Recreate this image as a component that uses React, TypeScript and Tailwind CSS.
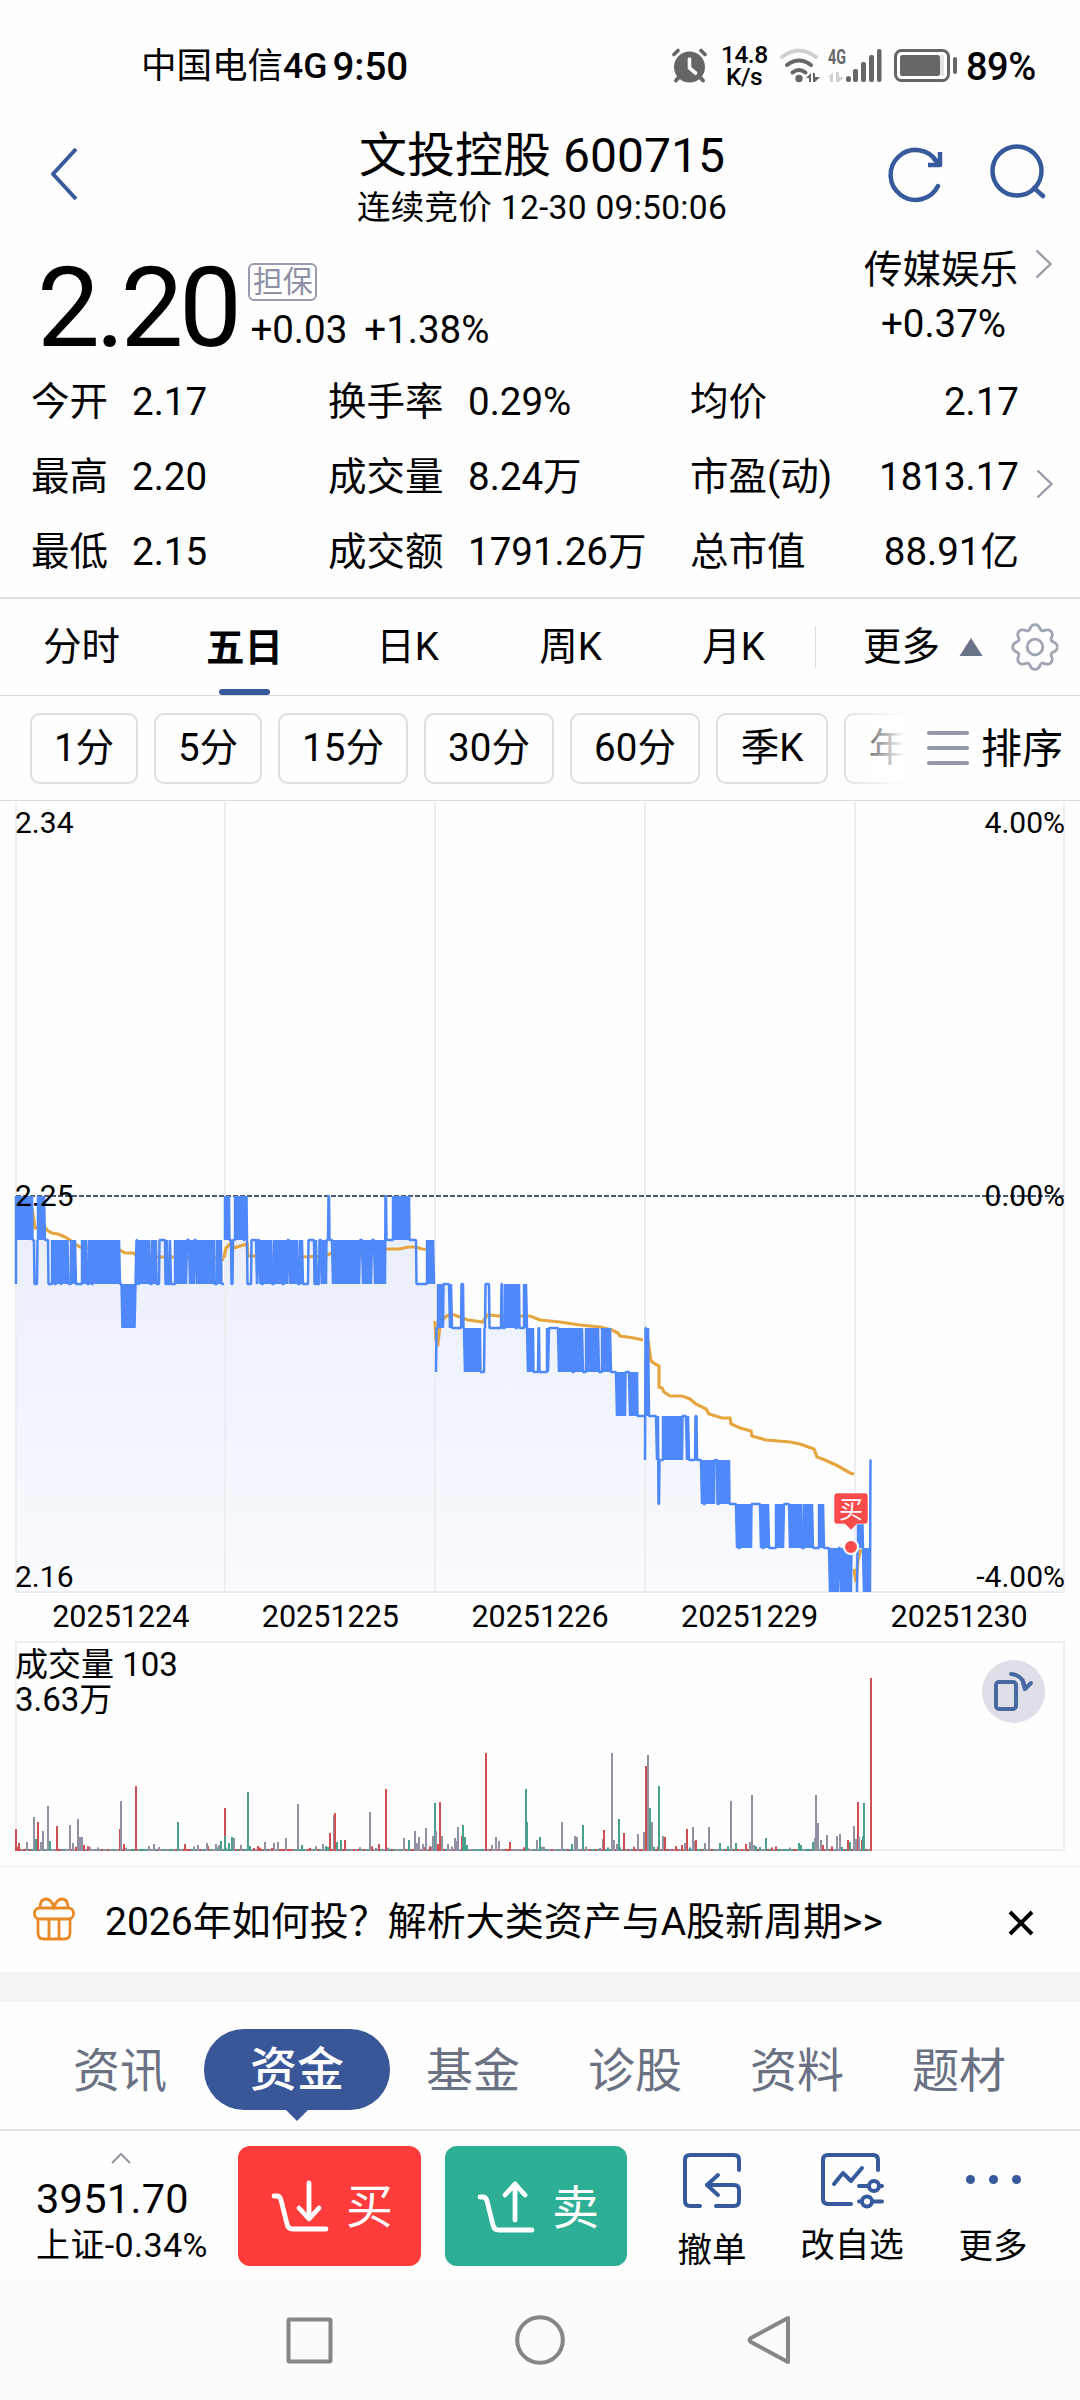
import { FC, ReactNode } from "react";

interface TextProps {
  children: ReactNode;
}

type Run = [number, number, number];
type Point = [number, number];
type Bar = [number, number, string];

const UP = "#cf5052";
const DOWN = "#4ba18f";
const FLAT = "#9092a3";
const BRAND = "#365a9b";

const QUOTE_ROWS = [
  ["今开", "2.17", "换手率", "0.29%", "均价", "2.17"],
  ["最高", "2.20", "成交量", "8.24万", "市盈(动)", "1813.17"],
  ["最低", "2.15", "成交额", "1791.26万", "总市值", "88.91亿"],
];

const PERIODS = ["分时", "五日", "日K", "周K", "月K"];
const DATES = ["20251224", "20251225", "20251226", "20251229", "20251230"];
const GRID_X = [16, 225, 435, 645, 855, 1064];

// [end x, upper tick, lower tick], one tick is 0.01 below 2.25
const DAYS: { start: number; from: number; runs: Run[] }[] = [
  {
    start: 16,
    from: 2,
    runs: [
      [32, 0, 1], [34, 1, 1], [37, 2, 2], [38, 1, 1], [45, 0, 1], [48, 1, 1], [52, 2, 2], [54, 1, 2],
      [56, 2, 2], [60, 1, 2], [61.5, 2, 2], [68, 1, 2], [71, 2, 2], [76, 1, 2], [82, 2, 2], [87, 1, 2],
      [89, 2, 2], [91, 1, 2], [93, 2, 2], [120, 1, 2], [121.5, 2, 2], [136, 2, 3], [137, 1, 1], [139, 2, 2],
      [150, 1, 2], [152, 2, 2], [156, 1, 2], [159, 2, 2], [165, 1, 1], [167, 2, 2], [168, 1, 2], [170, 2, 2],
      [171, 1, 2], [175, 2, 2], [187, 1, 2], [189, 1, 1], [194, 1, 2], [196, 1, 1], [214, 1, 2], [217, 2, 2],
      [221, 1, 2], [224, 2, 2],
    ],
  },
  {
    start: 225,
    from: 1,
    runs: [
      [229, 0, 1], [231, 1, 1], [232.5, 2, 2], [235, 1, 1], [243, 0, 1], [244.5, 1, 1], [247, 0, 1],
      [251, 2, 2], [256, 1, 1], [257, 1, 2], [259, 1, 1], [261, 1, 2], [263, 2, 2], [272, 1, 2], [274, 2, 2],
      [282, 1, 2], [284, 2, 2], [287, 1, 2], [289, 1, 1], [298, 1, 2], [300, 2, 2], [303, 1, 2], [308, 2, 2],
      [314, 1, 1], [316, 2, 2], [317, 1, 2], [319, 2, 2], [321, 1, 1], [326, 1, 2], [328, 1, 1],
      [329, 0, 0], [332, 1, 1], [360, 1, 2], [362, 1, 1], [372, 1, 2], [374, 1, 1], [385, 1, 2],
      [386, 0, 0], [393, 1, 1], [409, 0, 1], [416, 1, 1], [427, 2, 2], [434, 1, 2],
    ],
  },
  {
    start: 436,
    from: 4,
    runs: [
      [438, 3, 3], [443, 2, 3], [449, 2, 2], [452, 2, 3], [461, 3, 3], [463, 2, 2], [464, 3, 3], [480, 3, 4],
      [484, 4, 4], [485, 3, 3], [489, 2, 2], [501, 3, 3], [502, 2, 2], [505, 3, 3], [515, 2, 3], [517, 3, 3],
      [519, 2, 3], [524, 3, 3], [527, 2, 3], [533, 3, 4], [538, 4, 4], [539, 3, 3], [547, 4, 4], [549, 3, 4],
      [558, 3, 3], [572, 3, 4], [574, 4, 4], [583, 3, 4], [586, 4, 4], [599, 3, 4], [602, 4, 4], [611, 3, 4],
      [616, 4, 4], [625, 4, 5], [629, 4, 4], [637, 4, 5], [644, 5, 5],
    ],
  },
  {
    start: 645,
    from: 6,
    runs: [
      [646, 3, 3], [649, 3, 5], [656, 5, 5], [658, 5, 6], [659, 7, 7], [663, 6, 6], [682, 5, 6], [686, 5, 5],
      [689, 5, 6], [695, 6, 6], [696.5, 5, 5], [701, 6, 6], [703, 6, 7], [705, 7, 7], [714, 6, 7], [717, 6, 6],
      [719, 7, 7], [729, 6, 7], [736, 7, 7], [738, 7, 8], [740, 8, 8], [751, 7, 8], [760, 7, 7], [762, 7, 8],
      [764, 8, 8], [769, 7, 8], [776, 8, 8], [784, 7, 8], [789, 7, 7], [802, 7, 8], [804, 8, 8], [813, 7, 8],
      [819, 8, 8], [824, 7, 8], [829, 8, 8], [838, 8, 9], [840, 8, 8], [851, 8, 9], [853, 8, 8],
    ],
  },
  {
    start: 857,
    from: 9,
    runs: [[858, 8, 8], [863, 7, 8], [870, 8, 9], [871, 6, 6]],
  },
];

const AVERAGES: Point[][] = [
  [
    [32, 1208], [35, 1228], [44, 1226], [48, 1231], [52, 1233], [58, 1234], [65, 1237], [70, 1240], [75, 1244],
    [80, 1247], [90, 1248], [120, 1250], [125, 1253], [134, 1253], [137, 1257], [175, 1257], [215, 1258], [224, 1260],
  ],
  [
    [224, 1258], [226, 1248], [230, 1244], [234, 1248], [240, 1246], [247, 1244], [248, 1256], [300, 1257],
    [325, 1256], [332, 1253], [360, 1256], [380, 1250], [387, 1249], [400, 1249], [408, 1247], [416, 1247],
    [422, 1249], [434, 1250],
  ],
  [
    [435, 1321], [436, 1340], [438, 1343], [440, 1325], [445, 1317], [451, 1314], [460, 1317], [468, 1320],
    [483, 1322], [487, 1315], [500, 1316], [530, 1316], [540, 1320], [560, 1322], [580, 1325], [600, 1327],
    [612, 1330], [618, 1333], [620, 1336], [634, 1338], [643, 1340],
  ],
  [
    [648, 1340], [651, 1361], [655, 1364], [659, 1366], [659, 1387], [662, 1388], [664, 1392], [670, 1396],
    [682, 1396], [690, 1399], [696, 1404], [706, 1409], [709, 1414], [722, 1418], [730, 1418], [731, 1424],
    [740, 1428], [751, 1431], [752, 1436], [766, 1440], [790, 1442], [800, 1444], [814, 1449], [817, 1457],
    [825, 1460], [838, 1466], [850, 1473], [854, 1474],
  ],
  [[854, 1569], [856, 1582], [858, 1560], [861, 1549]],
];

// [x, height, colour]
const BARS: Bar[] = [
  [16, 21, UP], [19, 7, UP], [27, 8, FLAT], [34, 33, FLAT], [36, 11, DOWN], [38, 28, UP], [41, 8, FLAT],
  [43, 19, FLAT], [48, 44, FLAT], [50, 9, DOWN], [57, 24, UP], [70, 25, FLAT], [73, 7, FLAT], [78, 31, FLAT],
  [80, 13, FLAT], [82, 13, FLAT], [84, 5, UP], [120, 21, UP], [121, 49, FLAT], [124, 6, UP], [136, 64, UP],
  [149, 4, FLAT], [154, 6, FLAT], [159, 3, FLAT], [178, 28, DOWN], [185, 6, UP], [198, 5, FLAT], [207, 7, FLAT],
  [216, 6, FLAT], [219, 5, FLAT], [221, 9, DOWN], [225, 42, UP], [225, 14, DOWN], [229, 7, DOWN], [232, 13, DOWN],
  [234, 12, FLAT], [241, 5, FLAT], [248, 58, DOWN], [258, 4, UP], [265, 8, FLAT], [274, 7, FLAT], [278, 8, FLAT],
  [286, 12, FLAT], [298, 46, FLAT], [302, 5, DOWN], [323, 6, FLAT], [330, 17, UP], [334, 35, FLAT], [335, 37, UP],
  [337, 8, DOWN], [341, 10, DOWN], [345, 10, UP], [370, 38, FLAT], [379, 6, UP], [386, 61, UP], [404, 12, FLAT],
  [409, 10, DOWN], [415, 19, FLAT], [417, 7, FLAT], [419, 13, FLAT], [423, 6, FLAT], [426, 22, FLAT],
  [433, 14, FLAT], [435, 47, DOWN], [436, 19, FLAT], [438, 6, UP], [440, 48, UP], [442, 14, FLAT], [448, 6, FLAT],
  [455, 12, FLAT], [457, 9, FLAT], [458, 23, FLAT], [462, 14, UP], [463, 25, DOWN], [465, 13, DOWN], [467, 5, DOWN],
  [486, 97, UP], [492, 5, FLAT], [496, 13, FLAT], [499, 9, FLAT], [510, 8, UP], [526, 61, DOWN], [527, 28, DOWN],
  [537, 10, FLAT], [540, 13, DOWN], [562, 28, FLAT], [572, 6, DOWN], [575, 14, FLAT], [577, 13, FLAT],
  [583, 25, DOWN], [603, 11, FLAT], [604, 20, UP], [612, 97, FLAT], [614, 10, FLAT], [617, 6, FLAT],
  [619, 31, DOWN], [624, 17, UP], [638, 16, FLAT], [644, 18, FLAT], [646, 84, UP], [648, 95, FLAT], [650, 42, DOWN],
  [652, 28, FLAT], [659, 64, DOWN], [663, 14, FLAT], [665, 13, UP], [682, 5, UP], [685, 7, FLAT], [687, 21, UP],
  [693, 23, FLAT], [695, 9, FLAT], [696, 10, UP], [705, 7, FLAT], [709, 23, FLAT], [720, 7, DOWN], [731, 49, FLAT],
  [736, 7, DOWN], [746, 6, UP], [750, 8, FLAT], [752, 55, FLAT], [754, 5, FLAT], [766, 12, DOWN], [799, 7, DOWN],
  [801, 5, DOWN], [813, 8, DOWN], [815, 12, FLAT], [816, 55, FLAT], [818, 27, FLAT], [821, 10, FLAT],
  [823, 5, UP], [827, 15, FLAT], [837, 14, FLAT], [840, 16, FLAT], [848, 10, UP], [850, 8, DOWN], [854, 24, FLAT],
  [856, 11, FLAT], [858, 48, UP], [859, 13, FLAT], [862, 10, UP], [863, 14, DOWN], [864, 47, DOWN], [871, 172, UP],
];

const tickY = (tick: number) => 1196 + tick * 44;

// Dense runs swing between both ticks on every step
const tracePrice = (start: number, from: number, runs: Run[]) => {
  let x = start;
  let d = `M${x} ${tickY(from)}`;
  runs.forEach(([end, top, bottom]) => {
    if (top === bottom) {
      d += `L${x + 0.5} ${tickY(top)}L${end} ${tickY(top)}`;
    } else {
      let low = false;
      for (let p = x; p <= end; p += 1) {
        d += `L${p} ${tickY(low ? bottom : top)}`;
        low = !low;
      }
    }
    x = end;
  });
  return { d, end: x };
};

const noise = (i: number) => {
  const v = Math.sin(i * 12.9898) * 43758.5453;
  return v - Math.floor(v);
};

const SMALL_BARS: Bar[] = Array.from({ length: 428 }, (_, i) => {
  const color = noise(i + 9) > 0.72 ? UP : noise(i + 31) > 0.6 ? DOWN : FLAT;
  return [16 + i * 2, noise(i) > 0.86 ? 2 + noise(i + 5) * 2 : 1, color];
});

const Chevron: FC = () => (
  <svg viewBox="0 0 18 30" className="h-[30px] w-[18px]" fill="none" stroke="#9a9ba9" strokeWidth="2.4">
    <path d="M1.5 1.5 15.5 15 1.5 28.5" />
  </svg>
);

const StatusBar: FC = () => (
  <div className="flex h-[132px] pl-[141px]">
    <div className="flex w-[530px] shrink-0 items-center pt-[2px] text-[35.500px] leading-none">
      <span>中国电信</span>
      <span className="font-medium">4G</span>
      <span className="ml-[5px] text-[38.500px] font-medium">9:50</span>
    </div>
    <div className="flex items-center text-[#666666]">
      <svg viewBox="671 48 37 36" className="h-[36px] w-[37px]" fill="none" stroke="currentColor" strokeLinecap="round">
        <circle cx="689.5" cy="67" r="15.5" fill="currentColor" stroke="none" />
        <path d="m680 76-4 4.500M699 76l4 4.500" strokeWidth="4" />
        <path d="m674 54.500 4-4M705 54.500l-4-4" strokeWidth="3.600" />
        <path d="M689.500 59v9l6 5" stroke="#fff" strokeWidth="3.600" />
      </svg>
      <div className="ml-[13px] w-[46px] text-center text-[24.500px] font-medium leading-[22px] tracking-[-0.500px] text-black">
        <div>14.8</div>
        <div>K/s</div>
      </div>
      <svg viewBox="779 46 107 38" className="ml-[11px] h-[38px] w-[107px]" fill="none" stroke="currentColor">
        <g strokeLinecap="round" strokeWidth="4">
          <path d="M783 56q17-13 34 0" stroke="#d0d0d0" />
          <path d="M788 64q12-9 24 0" />
          <path d="M793.500 71.500q6.500-5 13 0" />
        </g>
        <g fill="currentColor" stroke="none">
          <circle cx="800" cy="77.500" r="3.700" />
          <path d="m807 77 5-5v9h-2v-4zM814 72h2v4h5l-5 5h-2z" />
          <path d="m829 76 5-5v10h-3v-5zM837 71h3v5h5l-5 5h-3z" fill="#d0d0d0" />
          <rect x="847" y="75" width="5" height="6" rx="2.500" />
          <rect x="854" y="68" width="5" height="13" rx="2" />
          <rect x="862" y="61" width="5" height="20" rx="2" />
          <rect x="870" y="54" width="5" height="27" rx="2" />
          <rect x="878" y="48" width="4.500" height="33" rx="2" />
          <text x="829" y="63" fontSize="20" fontWeight="700" textLength="18" lengthAdjust="spacingAndGlyphs">
            4G
          </text>
        </g>
      </svg>
      <svg viewBox="894 48 65 36" className="ml-[8px] h-[36px] w-[65px]">
        <rect x="896.500" y="50.500" width="53" height="30" rx="6" fill="none" stroke="currentColor" strokeWidth="3" />
        <rect x="901" y="55" width="40" height="21" rx="2.500" fill="currentColor" />
        <rect x="941" y="55" width="4" height="21" rx="1.500" fill="#e4e4e4" />
        <rect x="954" y="57" width="4" height="17" rx="2" fill="currentColor" />
      </svg>
      <span className="ml-[8px] pt-[2px] text-[38px] font-medium leading-none tracking-[-0.500px] text-black">89%</span>
    </div>
  </div>
);

const Header: FC = () => (
  <div className="flex h-[106px] items-start justify-between pl-[49px] pr-[34px]">
    <svg viewBox="0 0 30 54" className="mt-[15px] h-[54px] w-[30px]" fill="none" stroke={BRAND} strokeWidth="4">
      <path d="M27 2 4 27l23 25" strokeLinejoin="round" />
    </svg>
    <div className="ml-[119px] flex flex-col items-center">
      <div className="text-[48px] leading-[48px]">文投控股 600715</div>
      <div className="mt-[11px] text-[33.500px] leading-[34px] tracking-[0.300px]">连续竞价 12-30 09:50:06</div>
    </div>
    <svg viewBox="886 143 160 62" className="mt-[11px] h-[62px] w-[160px]" fill="none" stroke={BRAND} strokeWidth="4.500">
      <path d="M938 186a25 25 0 1 1-1-24" strokeLinecap="round" />
      <path d="M928 165h12v-13" strokeWidth="4.500" strokeLinejoin="round" />
      <path d="m933 158 6 6" strokeWidth="4" />
      <circle cx="1017" cy="171" r="24.500" />
      <path d="m1034 188 9 8" strokeLinecap="round" />
    </svg>
  </div>
);

const Price: FC = () => (
  <div className="flex h-[126px] pl-[37px]">
    <div className="pt-[14px] text-[112px] leading-none tracking-[-4.500px]">2.20</div>
    <div className="ml-[11px] pt-[25px]">
      <div className="flex h-[38px] w-[69px] items-center justify-center rounded-[6px] border-2 border-[#9a9bb0] text-[30px] leading-none text-[#8f90a6]">
        担保
      </div>
      <div className="mt-[9px] flex gap-[17px] pl-[2px] text-[38.500px] leading-[39px]">
        <span>+0.03</span>
        <span>+1.38%</span>
      </div>
    </div>
    <div className="ml-auto w-[154px] pt-[12px] text-center text-[38.500px] leading-[39px]">
      <div>传媒娱乐</div>
      <div className="mt-[15px] pl-[5px]">+0.37%</div>
    </div>
    <div className="w-[62px] pl-[17px] pt-[11px]">
      <Chevron />
    </div>
  </div>
);

const Quotes: FC = () => (
  <div className="flex h-[235px] items-start border-b-2 border-[#dfdfdf]">
    <div className="w-[1019px] pt-px">
      {QUOTE_ROWS.map((row) => (
        <div key={row[0]} className="flex h-[75px] items-center pl-[31px] text-[38.500px] leading-none">
          <span className="w-[101px]">{row[0]}</span>
          <span className="w-[196px]">{row[1]}</span>
          <span className="w-[140px]">{row[2]}</span>
          <span className="w-[222px]">{row[3]}</span>
          <span>{row[4]}</span>
          <span className="ml-auto">{row[5]}</span>
        </div>
      ))}
    </div>
    <div className="pl-[17px] pt-[105px]">
      <Chevron />
    </div>
  </div>
);

// Eight wide round teeth with narrow notches between them
const GEAR_PATH = Array.from({ length: 97 }, (_, i) => {
  const a = (i / 96) * Math.PI * 2;
  const notch = Math.pow((1 - Math.cos(a * 8)) / 2, 1.5);
  const r = 22.3 - 4.8 * notch;
  return `${i ? "L" : "M"}${(24 + r * Math.cos(a)).toFixed(2)} ${(24 + r * Math.sin(a)).toFixed(2)}`;
}).join("");

const PeriodTabs: FC = () => (
  <div className="flex h-[97px] items-center border-b border-[#dcdcdf] text-[38.500px] leading-none">
    {PERIODS.map((label) =>
      label === "五日" ? (
        <div key={label} className="flex h-full w-[163px] flex-col items-center justify-end font-bold">
          <span className="pb-[22px]">{label}</span>
          <span className="h-[6px] w-[51px] rounded-[3px] bg-[#365a9b]" />
        </div>
      ) : (
        <div key={label} className="w-[163px] text-center">
          {label}
        </div>
      ),
    )}
    <div className="h-[42px] w-px bg-[#dcdcdf]" />
    <span className="ml-[47px]">更多</span>
    <svg viewBox="0 0 24 20" className="ml-[19px] h-[20px] w-[24px]">
      <path d="M12 1 23.500 19H.5z" fill="#6a7488" />
    </svg>
    <svg viewBox="0 0 48 48" className="ml-[28px] h-[48px] w-[48px]" fill="none" stroke="#a0a5b4" strokeWidth="2.800">
      <path d={GEAR_PATH} strokeLinejoin="round" />
      <circle cx="24" cy="24" r="7.800" />
    </svg>
  </div>
);

const Chip: FC<TextProps & { width: string }> = ({ children, width }) => (
  <div
    className={`flex h-[71px] shrink-0 items-center justify-center rounded-[10px] border-2 border-[#dddee2] ${width}`}
  >
    {children}
  </div>
);

const MinuteChips: FC = () => (
  <div className="flex h-[105px] items-center border-b border-[#dcdcdf] text-[38.500px] leading-none">
    <div className="relative flex w-[905px] gap-[16px] overflow-hidden pl-[30px]">
      <Chip width="w-[108px]">1分</Chip>
      <Chip width="w-[108px]">5分</Chip>
      <Chip width="w-[130px]">15分</Chip>
      <Chip width="w-[130px]">30分</Chip>
      <Chip width="w-[130px]">60分</Chip>
      <Chip width="w-[112px]">季K</Chip>
      <Chip width="w-[112px]">年K</Chip>
      <div className="absolute inset-y-0 right-0 w-[60px] bg-linear-to-r from-white/10 to-white" />
    </div>
    <div className="ml-[22px] flex w-[42px] flex-col gap-[11px]">
      <span className="h-[4px] rounded-full bg-[#9298a8]" />
      <span className="h-[4px] rounded-full bg-[#9298a8]" />
      <span className="h-[4px] rounded-full bg-[#9298a8]" />
    </div>
    <span className="ml-[12px] pt-[2px] text-[41px]">排序</span>
  </div>
);

const PriceChart: FC = () => (
  <svg viewBox="0 801 1080 793" className="block h-[793px] w-[1080px]" fontSize="30">
    <defs>
      <linearGradient id="price-area" gradientUnits="userSpaceOnUse" x1="0" y1="1196" x2="0" y2="1592">
        <stop offset="0" stopColor="#e9eef9" />
        <stop offset="0.500" stopColor="#f0f4fd" />
        <stop offset="1" stopColor="#fafbfe" />
      </linearGradient>
    </defs>
    {DAYS.map((day) => {
      const { d, end } = tracePrice(day.start, day.from, day.runs);
      return <path key={day.start} d={`${d}L${end} 1592L${day.start} 1592Z`} fill="url(#price-area)" />;
    })}
    <g stroke="#edeef1" strokeWidth="2">
      {GRID_X.map((x) => (
        <path key={x} d={`M${x} 802V1592`} />
      ))}
      <path d="M15 1592H1065" />
    </g>
    <path d="M16 1196H1064" stroke="#4a5c70" strokeWidth="2" strokeDasharray="5 2" />
    {AVERAGES.map((points, i) => (
      <path key={i} d={`M${points.join("L")}`} fill="none" stroke="#e5a63f" strokeWidth="3.200" />
    ))}
    {DAYS.map((day) => (
      <path
        key={day.start}
        d={tracePrice(day.start, day.from, day.runs).d}
        fill="none"
        stroke="#4e88fb"
        strokeWidth="2.500"
        strokeLinejoin="bevel"
      />
    ))}
    <text x="15" y="833">2.34</text>
    <text x="15" y="1206">2.25</text>
    <text x="15" y="1587">2.16</text>
    <g textAnchor="end">
      <text x="1065" y="833">4.00%</text>
      <text x="1065" y="1206">0.00%</text>
      <text x="1065" y="1587">-4.00%</text>
    </g>
    <path
      d="M837 1493h28a3 3 0 0 1 3 3v25a3 3 0 0 1-3 3h-8l-6 6-6-6h-8a3 3 0 0 1-3-3v-25a3 3 0 0 1 3-3z"
      fill="#f94a4c"
      stroke="#fff"
      strokeOpacity="0.600"
    />
    <text x="851" y="1518" fontSize="24" textAnchor="middle" fill="#fff">买</text>
    <circle cx="851" cy="1547" r="7" fill="#f94a4c" stroke="#fff" strokeWidth="2" />
  </svg>
);

const VolumeChart: FC = () => (
  <div className="relative h-[226px] border-b border-[#f0f0f0]">
    <svg viewBox="0 1641 1080 225" className="block h-[225px] w-[1080px]" fontSize="33">
      <rect x="16" y="1642" width="1048" height="208" fill="none" stroke="#efeff1" strokeWidth="2" />
      {[...SMALL_BARS, ...BARS].map(([x, height, color], i) => (
        <rect key={i} x={x - 1} y={1850 - height} width="2" height={height + 1} fill={color} />
      ))}
      <text x="15" y="1676">成交量 103</text>
      <text x="15" y="1711">3.63万</text>
    </svg>
    <div className="absolute left-[982px] top-[19px] flex size-[63px] items-center justify-center rounded-full bg-[#dfe0e7]">
      <svg viewBox="999 1670 42 44" className="h-[44px] w-[42px]" fill="none" stroke="#4a69a3" strokeWidth="4">
        <rect x="1002" y="1682" width="20" height="27" rx="3" />
        <path d="M1017 1674q13 1 14 15" strokeLinecap="round" />
        <path d="m1029 1683 2 6 6-6" strokeLinecap="round" strokeLinejoin="round" />
      </svg>
    </div>
  </div>
);

const Banner: FC = () => (
  <div className="flex h-[105px] items-center pl-[33px] text-[39px] leading-none">
    <svg viewBox="33 1897 42 44" className="-mt-px h-[44px] w-[42px]" fill="none" stroke="#e88a26" strokeWidth="2.800">
      <rect x="34.500" y="1908" width="39" height="11" rx="5" />
      <path d="M38 1919v14q0 6 6 6h20q6 0 6-6v-14M49 1919v20M59 1919v20" />
      <path d="M40 1908q0-9 6-9 5 0 8 8 3-8 8-8 6 0 6 9" />
    </svg>
    <span className="ml-[30px] pt-[5px]">2026年如何投？解析大类资产与A股新周期&gt;&gt;</span>
    <svg viewBox="0 0 26 26" className="ml-auto mr-[46px] mt-[7px] h-[26px] w-[26px]" stroke="#000" strokeWidth="4">
      <path d="m2 2 22 22M24 2 2 24" />
    </svg>
  </div>
);

const InfoTabs: FC = () => (
  <div className="flex h-[129px] items-center border-b-2 border-[#e1e1e2] pl-[73px] pt-[9px] text-[47px] leading-none text-[#6a7183]">
    <span>资讯</span>
    <div className="relative -mt-px ml-[37px] mr-[36px] flex h-[81px] w-[186px] items-center justify-center rounded-[40px] bg-[#395699] font-medium text-white">
      资金
      <svg viewBox="0 0 24 12" className="absolute left-[81px] top-[80px] h-[12px] w-[24px]">
        <path d="M0 0h24L12 12z" fill="#395699" />
      </svg>
    </div>
    <div className="flex gap-[68px]">
      <span>基金</span>
      <span>诊股</span>
      <span>资料</span>
      <span>题材</span>
    </div>
  </div>
);

const ActionBar: FC = () => (
  <div className="flex h-[149px] items-start">
    <div className="flex h-full w-[238px] flex-col pl-[36px]">
      <svg viewBox="0 0 20 12" className="ml-[75px] mt-[21px] h-[12px] w-[20px]" fill="none" stroke="#9497a3" strokeWidth="2">
        <path d="m1 11 9-9 9 9" />
      </svg>
      <span className="mt-[14px] text-[41.500px] leading-[42px] tracking-[0.300px]">3951.70</span>
      <span className="mt-[8px] whitespace-nowrap text-[34px] leading-[34px] tracking-[0.400px]">上证-0.34%</span>
    </div>
    <div className="mt-[15px] flex h-[120px] w-[183px] items-center rounded-[12px] bg-[#fe3c3c] pl-[31px] text-[47px] leading-none text-white">
      <svg viewBox="269 2178 62 53" className="h-[53px] w-[62px]" fill="none" stroke="#fff" strokeWidth="4.800" strokeLinecap="round" strokeLinejoin="round">
        <path d="M274 2194h3q3 0 4 4l6 24q1 5 6 5h33" />
        <path d="M309 2181v36M299 2206l10 11 10-11" />
      </svg>
      <span className="ml-[15px] pt-px">买</span>
    </div>
    <div className="ml-[24px] mt-[15px] flex h-[120px] w-[182px] items-center rounded-[12px] bg-[#2daf95] pl-[30px] text-[47px] leading-none text-white">
      <svg viewBox="475 2178 62 53" className="h-[53px] w-[62px]" fill="none" stroke="#fff" strokeWidth="4.800" strokeLinecap="round" strokeLinejoin="round">
        <path d="M480 2195h3q3 0 4 4l6 24q1 5 6 5h33" />
        <path d="M515 2218v-36M505 2193l10-11 10 11" />
      </svg>
      <span className="ml-[15px] pt-[3px]">卖</span>
    </div>
    <div className="ml-[50px] flex w-[70px] flex-col items-center pt-[20px] text-[34.500px] leading-none">
      <svg viewBox="681 2151 62 60" className="h-[60px] w-[62px]" fill="none" stroke={BRAND} strokeWidth="4" strokeLinecap="round" strokeLinejoin="round">
        <path d="M739 2170v-10q0-5-5-5h-44q-5 0-5 5v41q0 5 5 5h10" />
        <path d="M716 2206h18q5 0 5-5v-11q0-5-5-5h-27" />
        <path d="m718 2175-11 10 11 10" />
      </svg>
      <span className="mt-[22px]">撤单</span>
    </div>
    <div className="ml-[52px] flex w-[106px] flex-col items-center pt-[20px] text-[34.500px] leading-none">
      <svg viewBox="819 2151 68 60" className="h-[60px] w-[68px]" fill="none" stroke={BRAND} strokeWidth="4" strokeLinecap="round" strokeLinejoin="round">
        <path d="M879 2170v-10q0-5-5-5h-45q-5 0-5 5v39q0 5 5 5h23" />
        <path d="m835 2184 9-11 8 8 11-13" />
        <path d="M860 2186h8M881 2186h2M860 2201.500h2M875 2201.500h8" />
        <circle cx="875" cy="2186" r="5" />
        <circle cx="868" cy="2201.500" r="5" />
      </svg>
      <span className="mt-[17px] whitespace-nowrap">改自选</span>
    </div>
    <div className="ml-[53px] flex w-[70px] flex-col items-center pt-[44px] text-[34.500px] leading-none">
      <div className="flex gap-[14px]">
        <span className="size-[9px] rounded-full bg-[#365a9b]" />
        <span className="size-[9px] rounded-full bg-[#365a9b]" />
        <span className="size-[9px] rounded-full bg-[#365a9b]" />
      </div>
      <span className="mt-[45px]">更多</span>
    </div>
  </div>
);

const NavBar: FC = () => (
  <div className="flex h-[120px] items-start bg-[#fbfbfb] pl-[286px] pt-[33px]">
    <svg viewBox="0 0 506 54" className="h-[54px] w-[506px]" fill="none" stroke="#868686" strokeWidth="4" strokeLinejoin="round">
      <rect x="2.500" y="6.500" width="42" height="42" rx="1" />
      <circle cx="254" cy="27" r="22.800" />
      <path d="M502 5v44L465 29q-3-2 0-4z" />
    </svg>
  </div>
);

export default function App() {
  return (
    <div className="h-[2400px] w-[1080px] overflow-hidden bg-[#fefefe] font-['Roboto','Noto_Sans_CJK_SC',sans-serif] text-black">
      <StatusBar />
      <Header />
      <Price />
      <Quotes />
      <PeriodTabs />
      <MinuteChips />
      <PriceChart />
      <div className="ml-[16px] flex h-[47px] w-[1048px] items-center text-[30.500px] leading-none">
        {DATES.map((date) => (
          <span key={date} className="flex-1 text-center">
            {date}
          </span>
        ))}
      </div>
      <VolumeChart />
      <Banner />
      <div className="h-[30px] bg-[#f3f4f6]" />
      <InfoTabs />
      <ActionBar />
      <NavBar />
    </div>
  );
}
